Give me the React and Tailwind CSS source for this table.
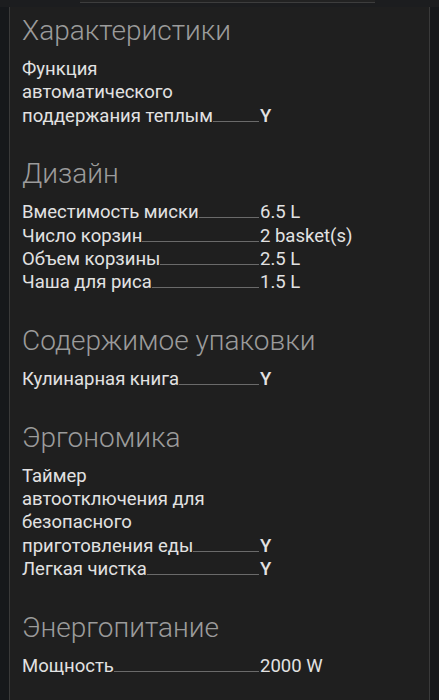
import React from 'react'

const sections = [
  {
    title: 'Характеристики',
    rows: [{ label: ['Функция', 'автоматического', 'поддержания теплым'], value: 'Y' }],
  },
  {
    title: 'Дизайн',
    rows: [
      { label: ['Вместимость миски'], value: '6.5 L' },
      { label: ['Число корзин'], value: '2 basket(s)' },
      { label: ['Объем корзины'], value: '2.5 L' },
      { label: ['Чаша для риса'], value: '1.5 L' },
    ],
  },
  {
    title: 'Содержимое упаковки',
    rows: [{ label: ['Кулинарная книга'], value: 'Y' }],
  },
  {
    title: 'Эргономика',
    rows: [
      { label: ['Таймер', 'автоотключения для', 'безопасного', 'приготовления еды'], value: 'Y' },
      { label: ['Легкая чистка'], value: 'Y' },
    ],
  },
  {
    title: 'Энергопитание',
    rows: [{ label: ['Мощность'], value: '2000 W' }],
  },
]

function SpecRow({ label, value }) {
  const first = label.slice(0, -1)
  const last = label[label.length - 1]
  return (
    <div>
      {first.map((line) => (
        <div key={line}>{line}</div>
      ))}
      <div className="flex items-baseline">
        <div className="w-[237px] flex items-baseline shrink-0">
          <span>{last}</span>
          <div className="flex-1 h-px bg-[#6a6a6a]" />
        </div>
        <span className={value === 'Y' ? 'font-medium pl-px' : 'pl-px'}>{value}</span>
      </div>
    </div>
  )
}

export default function App() {
  return (
    <div className="min-h-screen bg-[#16181b] font-['Roboto',sans-serif]">
      {/* top strip from the element above */}
      <div className="h-[7px] bg-[#1c1d1f]">
        <div className="ml-[80px] w-[295px] h-[3px] bg-[#222] border-b border-[#3d3d3d]" />
      </div>

      <div className="mx-[9px] bg-[#1f1f1f] border-x border-[#3a3a3a] px-[12px] pt-[6px] pb-[24px]">
        {sections.map((s, i) => (
          <div key={s.title} className={i > 0 ? 'mt-[28.5px]' : ''}>
            <h2 className="text-[28px] leading-[36px] font-light text-[#9b9b9b] mb-[9px]">
              {s.title}
            </h2>
            <div className="text-[18.5px] leading-[23.3px] text-[#e2e2e2]">
              {s.rows.map((r) => (
                <SpecRow key={r.label.join(' ')} label={r.label} value={r.value} />
              ))}
            </div>
          </div>
        ))}
      </div>
      <div className="h-[10px] bg-[#0c0c0c]" />
    </div>
  )
}
